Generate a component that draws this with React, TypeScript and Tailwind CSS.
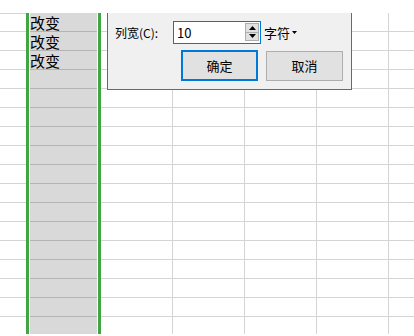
import React from 'react'

const ROWS = Array.from({ length: 17 }, (_, i) => i)

const PlainCol = ({ w, edge }: { w: string; edge?: boolean }) => (
    <div className={`${w} shrink-0 flex flex-col ${edge ? 'border-r border-[#d4d4d4]' : ''}`}>
        {ROWS.map((r) => (
            <div key={r} className="h-[19px] shrink-0 border-b border-[#d4d4d4]"></div>
        ))}
    </div>
)

const App = () => {
    return (
        <div className="w-[414px] h-[336px] bg-white overflow-hidden" style={{ fontFamily: '"Noto Sans CJK SC", "Noto Sans", sans-serif' }}>
            <div className="h-[13px]"></div>

            <div className="relative h-[321px] overflow-hidden flex">
                {/* left column */}
                <div className="w-[26px] shrink-0 flex flex-col">
                    {ROWS.map((r) => (
                        <div key={r} className={`shrink-0 border-b border-[#d4d4d4] ${r === 0 ? 'h-[19px] border-t' : 'h-[19px]'}`}></div>
                    ))}
                </div>

                {/* selected column */}
                <div className="w-[3px] shrink-0 bg-[#41a541]"></div>
                <div className="w-[69px] shrink-0 flex flex-col border-x border-white bg-[#d9d9d9]">
                    {ROWS.map((r) => (
                        <div key={r} className="h-[19px] shrink-0 border-b border-[#b4b4b4] flex items-end">
                            <span className="text-[15px] leading-[17px] text-black">{r < 3 ? '改变' : ''}</span>
                        </div>
                    ))}
                </div>
                <div className="w-[3px] shrink-0 bg-[#41a541]"></div>

                <PlainCol w="w-[72px]" edge />
                <PlainCol w="w-[72px]" edge />
                <PlainCol w="w-[72px]" edge />
                <PlainCol w="w-[72px]" edge />
                <div className="flex-1">
                    <PlainCol w="w-full" />
                </div>

                {/* column width dialog */}
                <div className="absolute left-[107px] top-0 w-[245px] bg-[#f0f0f0] border-x border-b border-[#1a7fd4] z-10 pl-[7px] pt-[8px] pb-[8px] text-[12px] text-black">
                    <div className="flex items-center h-[23px]">
                        <div className="w-[58px] shrink-0">列宽(C):</div>
                        <div className="relative w-[88px] h-[23px] shrink-0 bg-white border border-[#0078d7] flex items-center pl-[3px] text-[13px]">
                            10
                            <div className="absolute right-[1px] top-[1px] bottom-[2px] w-[14px] flex flex-col border border-[#adadad] bg-[#e1e1e1]">
                                <div className="flex-1 flex items-center justify-center border-b border-[#adadad]">
                                    <svg width="7" height="4" viewBox="0 0 7 4"><path d="M0 4 L3.5 0 L7 4 Z" fill="#000" /></svg>
                                </div>
                                <div className="flex-1 flex items-center justify-center">
                                    <svg width="7" height="4" viewBox="0 0 7 4"><path d="M0 0 L3.5 4 L7 0 Z" fill="#000" /></svg>
                                </div>
                            </div>
                        </div>
                        <div className="ml-[3px] flex items-center gap-[2px] text-[13px]">
                            字符
                            <svg width="5" height="3" viewBox="0 0 5 3"><path d="M0 0 L2.5 3 L5 0 Z" fill="#000" /></svg>
                        </div>
                    </div>

                    <div className="flex items-start gap-[8px] pl-[66px] mt-[6px]">
                        <div className="w-[77px] h-[31px] border-2 border-[#0078d7] bg-[#e1e1e1] flex items-center justify-center text-[13px]">
                            确定
                        </div>
                        <div className="w-[77px] h-[30px] mt-[1px] border border-[#adadad] bg-[#e1e1e1] flex items-center justify-center text-[13px]">
                            取消
                        </div>
                    </div>
                </div>
            </div>
        </div>
    )
}

export default App
